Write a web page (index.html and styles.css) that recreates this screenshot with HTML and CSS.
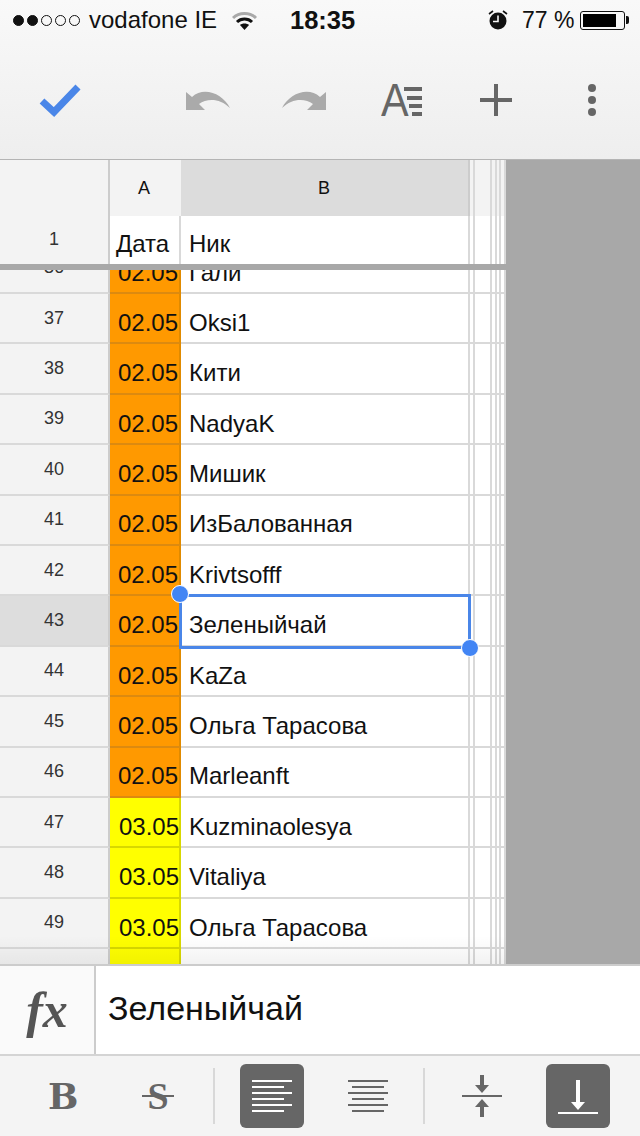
FILE: index.html
```html
<!DOCTYPE html>
<html lang="ru">
<head>
<meta charset="UTF-8">
<meta name="viewport" content="width=device-width, initial-scale=1.0">
<title>Sheet</title>
<link rel="stylesheet" href="styles.css">
</head>
<body>
<div class="phone">
  <div class="top">
    <div class="status">
      <div class="signal">
        <i class="dot on"></i><i class="dot on"></i><i class="dot"></i><i class="dot"></i><i class="dot"></i>
      </div>
      <span class="carrier">vodafone IE</span>
      <svg class="wifi" width="25" height="18" viewBox="0 0 25 18">
        <path d="M1 6 C7 0 18 0 24 6" fill="none" stroke="#a9a9a9" stroke-width="3"/>
        <path d="M5 10 C9 6 16 6 20 10" fill="none" stroke="#111" stroke-width="3"/>
        <path d="M8 13 C10 11 15 11 17 13 L12.5 18 Z" fill="#111"/>
      </svg>
      <span class="time">18:35</span>
      <svg class="alarm" width="20" height="20" viewBox="0 0 20 20">
        <circle cx="10" cy="11" r="8.5" fill="#111"/>
        <path d="M10 5.5 V11.5 H5" fill="none" stroke="#f7f7f7" stroke-width="1.6"/>
        <path d="M1 4 L5 1 M19 4 L15 1" stroke="#111" stroke-width="1.6"/>
      </svg>
      <span class="percent">77 %</span>
      <div class="battery"><div class="battery-fill"></div></div>
      <div class="battery-tip"></div>
    </div>
    <div class="tools">
      <svg class="ic-check" width="42" height="34" viewBox="0 0 42 34">
        <path d="M3 18 L15 29 L39 4" fill="none" stroke="#4a86e8" stroke-width="7"/>
      </svg>
      <svg class="ic-undo" width="44" height="20" viewBox="0 0 44 20">
        <path d="M0 2 V20 H19 L13 14 C21 8 34 8 44 18 C37 4 18 -4 6 7 Z" fill="#aaa"/>
      </svg>
      <svg class="ic-redo" width="44" height="20" viewBox="0 0 44 20">
        <path transform="translate(44 0) scale(-1 1)" d="M0 2 V20 H19 L13 14 C21 8 34 8 44 18 C37 4 18 -4 6 7 Z" fill="#aaa"/>
      </svg>
      <svg class="ic-format" width="42" height="34" viewBox="0 0 42 34">
        <text x="0" y="33" transform="scale(0.9 1)" class="ic-letter">A</text>
        <path d="M23 4 H41 V8 H23 Z M26 13 H41 V17 H26 Z M28 21 H41 V25 H28 Z M31 29 H41 V33 H31 Z" fill="#666"/>
      </svg>
      <svg class="ic-plus" width="32" height="32" viewBox="0 0 32 32">
        <path d="M14 0 H18 V14 H32 V18 H18 V32 H14 V18 H0 V14 H14 Z" fill="#666"/>
      </svg>
      <svg class="ic-more" width="8" height="32" viewBox="0 0 8 32">
        <circle cx="4" cy="4" r="4" fill="#666"/>
        <circle cx="4" cy="16" r="4" fill="#666"/>
        <circle cx="4" cy="28" r="4" fill="#666"/>
      </svg>
    </div>
  </div>

  <div class="sheet">
    <div class="grid">
      <div class="frozen">
        <div class="row head">
          <div class="num"></div>
          <div class="date">A</div>
          <div class="nick">B</div>
          <div class="rest"></div>
        </div>
        <div class="row title">
          <div class="num">1</div>
          <div class="date">Дата</div>
          <div class="nick">Ник</div>
          <div class="rest"></div>
        </div>
      </div>
      <div class="rows">
        <div class="rows-inner">
          <div class="row"><div class="num">36</div><div class="date orange">02.05</div><div class="nick">Гали</div><div class="rest"></div></div>
          <div class="row"><div class="num">37</div><div class="date orange">02.05</div><div class="nick">Oksi1</div><div class="rest"></div></div>
          <div class="row"><div class="num">38</div><div class="date orange">02.05</div><div class="nick">Кити</div><div class="rest"></div></div>
          <div class="row"><div class="num">39</div><div class="date orange">02.05</div><div class="nick">NadyaK</div><div class="rest"></div></div>
          <div class="row"><div class="num">40</div><div class="date orange">02.05</div><div class="nick">Мишик</div><div class="rest"></div></div>
          <div class="row"><div class="num">41</div><div class="date orange">02.05</div><div class="nick">ИзБалованная</div><div class="rest"></div></div>
          <div class="row"><div class="num">42</div><div class="date orange">02.05</div><div class="nick">Krivtsofff</div><div class="rest"></div></div>
          <div class="row active">
            <div class="num">43</div><div class="date orange">02.05</div>
            <div class="nick">Зеленыйчай
              <div class="selection"><i class="handle handle-start"></i><i class="handle handle-end"></i></div>
            </div>
            <div class="rest"></div>
          </div>
          <div class="row"><div class="num">44</div><div class="date orange">02.05</div><div class="nick">KaZa</div><div class="rest"></div></div>
          <div class="row"><div class="num">45</div><div class="date orange">02.05</div><div class="nick">Ольга Тарасова</div><div class="rest"></div></div>
          <div class="row"><div class="num">46</div><div class="date orange">02.05</div><div class="nick">Marleanft</div><div class="rest"></div></div>
          <div class="row"><div class="num">47</div><div class="date yellow">03.05</div><div class="nick">Kuzminaolesya</div><div class="rest"></div></div>
          <div class="row"><div class="num">48</div><div class="date yellow">03.05</div><div class="nick">Vitaliya</div><div class="rest"></div></div>
          <div class="row"><div class="num">49</div><div class="date yellow">03.05</div><div class="nick">Ольга Тарасова</div><div class="rest"></div></div>
          <div class="row"><div class="num"></div><div class="date yellow"></div><div class="nick"></div><div class="rest"></div></div>
        </div>
        <div class="fade"></div>
      </div>
    </div>
    <div class="blank"></div>
  </div>

  <div class="formula">
    <div class="fx">fx</div>
    <div class="formula-text">Зеленыйчай</div>
  </div>

  <div class="format">
    <span class="bold">B</span>
    <svg class="ic-strike" width="32" height="30" viewBox="0 0 32 30">
      <text x="16" y="28" class="ic-s">S</text>
      <rect x="0" y="14" width="32" height="2" fill="#666"/>
    </svg>
    <div class="sep sep-one"></div>
    <div class="tile tile-left">
      <svg width="40" height="32" viewBox="0 0 40 32">
        <path d="M0 1 H40 M0 7 H32 M0 13 H40 M0 19 H32 M0 25 H40 M0 31 H32" stroke="#fff" stroke-width="2"/>
      </svg>
    </div>
    <svg class="ic-center" width="40" height="32" viewBox="0 0 40 32">
      <path d="M0 1 H40 M4 7 H36 M0 13 H40 M4 19 H36 M0 25 H40 M4 31 H36" stroke="#666" stroke-width="2"/>
    </svg>
    <div class="sep sep-two"></div>
    <svg class="ic-middle" width="40" height="42" viewBox="0 0 40 42">
      <path d="M18 0 H22 V10 H27 L20 18 L13 10 H18 Z M0 20 H40 V22 H0 Z M20 24 L27 32 H22 V42 H18 V32 H13 Z" fill="#666"/>
    </svg>
    <div class="tile tile-right">
      <svg class="ic-bottom" width="40" height="34" viewBox="0 0 40 34">
        <path d="M18 0 H22 V22 H27 L20 30 L13 22 H18 Z M0 32 H40 V34 H0 Z" fill="#fff"/>
      </svg>
    </div>
  </div>
</div>
</body>
</html>
```

FILE: styles.css
```css
html, body {
  margin: 0;
  padding: 0;
}

body {
  font-family: "Liberation Sans", Arial, sans-serif;
  background-color: #fff;
}

.phone {
  width: 640px;
  height: 1136px;
  display: flex;
  flex-direction: column;
  overflow: hidden;
}

/* top bars */
.top {
  height: 159px;
  flex: none;
  background: linear-gradient(#f9f9f9, #eee);
  border-bottom: 1px solid #b4b4b4;
}

.status {
  height: 40px;
  display: flex;
  align-items: center;
  padding-left: 13px;
  color: #111;
  font-size: 24px;
}

.signal {
  display: flex;
  gap: 3px;
}

.dot {
  display: block;
  width: 9px;
  height: 9px;
  border: 1px solid #111;
  border-radius: 50%;
}

.dot.on {
  background-color: #111;
}

.carrier {
  margin-left: 9px;
  width: 143px;
}

.wifi {
  margin-top: 1px;
}

.time {
  margin-left: 33px;
  width: 198px;
  font-weight: bold;
  font-size: 25.5px;
}

.percent {
  margin-left: 14px;
  width: 58px;
  font-size: 23px;
}

.battery {
  width: 45px;
  height: 19px;
  box-sizing: border-box;
  padding: 2px;
  border: 1px solid #111;
  border-radius: 3px;
}

.battery-fill {
  width: 33px;
  height: 13px;
  background-color: #000;
}

.battery-tip {
  width: 3px;
  height: 8px;
  margin-left: 1px;
  border-radius: 0 2px 2px 0;
  background-color: #111;
}

.tools {
  height: 119px;
  box-sizing: border-box;
  display: flex;
  align-items: center;
  padding: 1px 0 0 39px;
}

.tools svg {
  flex: none;
}

.ic-undo {
  margin-left: 105px;
}

.ic-redo {
  margin-left: 52px;
}

.ic-format {
  margin-left: 55px;
}

.ic-letter {
  font-family: "Liberation Sans", Arial, sans-serif;
  font-size: 46px;
  fill: #666;
}

.ic-plus {
  margin-left: 57px;
}

.ic-more {
  margin-left: 76px;
}

/* spreadsheet */
.sheet {
  height: 804px;
  flex: none;
  display: flex;
  background-color: #a8a8a8;
}

.grid {
  width: 506px;
  flex: none;
  display: flex;
  flex-direction: column;
  background-color: #fff;
}

.row {
  height: 50.4px;
  display: flex;
  font-size: 24px;
  color: #111;
}

.num {
  width: 110px;
  flex: none;
  box-sizing: border-box;
  display: flex;
  align-items: center;
  justify-content: center;
  font-size: 18px;
  color: #333;
  background-color: #f3f3f3;
  border-right: 2px solid #ccc;
  border-bottom: 2px solid #d9d9d9;
}

.date {
  width: 71px;
  flex: none;
  box-sizing: border-box;
  display: flex;
  align-items: flex-end;
  justify-content: flex-end;
  padding: 0 3px 5.5px 0;
  border-bottom: 2px solid #d9d9d9;
}

.nick {
  width: 289px;
  flex: none;
  box-sizing: border-box;
  display: flex;
  align-items: flex-end;
  padding: 0 0 5.5px 8px;
  border-left: 2px solid #d9d9d9;
  border-right: 2px solid #d9d9d9;
  border-bottom: 2px solid #d9d9d9;
}

.rest {
  flex: 1;
  background-image:
    linear-gradient(#d9d9d9, #d9d9d9),
    linear-gradient(#d9d9d9, #d9d9d9),
    linear-gradient(#d9d9d9, #d9d9d9),
    linear-gradient(#d9d9d9, #d9d9d9),
    linear-gradient(#d9d9d9, #d9d9d9);
  background-repeat: no-repeat;
  background-size: 2px 100%;
  background-position: 3px 0, 20px 0, 25px 0, 29px 0, 34px 0;
  border-bottom: 2px solid #d9d9d9;
  box-sizing: border-box;
}

.orange {
  background-color: #f90;
  border-right: 2px solid #e08a00;
  border-bottom-color: #dc8a10;
  padding-right: 1px;
}

.yellow {
  background-color: #ff0;
  border-right: 2px solid #d8d800;
  border-bottom-color: #d8d800;
  padding-right: 0;
}

.orange + .nick, .yellow + .nick {
  border-left: none;
}

.frozen {
  flex: none;
  border-bottom: 6px solid #a8a8a8;
}

.head {
  height: 56px;
  font-size: 18px;
}

.head .num {
  border-bottom: none;
}

.head .date {
  align-items: center;
  justify-content: center;
  padding: 0 3px 0 0;
  background-color: #f3f3f3;
  border-bottom: none;
}

.head .nick {
  align-items: center;
  justify-content: center;
  padding: 0 1px 0 0;
  background-color: #dcdcdc;
  border-left: none;
  border-right-color: #ccc;
  border-bottom: none;
}

.head .rest {
  background-color: #f3f3f3;
  border-bottom: none;
}

.title {
  height: 48px;
}

.title .num {
  border-bottom: none;
  padding-bottom: 1px;
}

.title .date {
  justify-content: center;
  padding: 0 4px 6px 0;
  border-right: 2px solid #d9d9d9;
  border-bottom: none;
}

.title .nick {
  border-left: none;
  padding-bottom: 6px;
  border-bottom: none;
}

.title .rest {
  border-bottom: none;
}

.rows {
  flex: 1;
  position: relative;
  overflow: hidden;
}

.rows-inner {
  margin-top: -26.4px;
}

.fade {
  position: absolute;
  left: 0;
  right: 0;
  bottom: 0;
  height: 28px;
  background: linear-gradient(rgba(0, 0, 0, 0), rgba(0, 0, 0, 0.05));
}

.active .num {
  background-color: #ddd;
}

.active .nick {
  position: relative;
}

.selection {
  position: absolute;
  z-index: 1;
  left: -2px;
  top: -2px;
  right: -3px;
  bottom: -4px;
  border: 3px solid #4a86e8;
}

.handle {
  position: absolute;
  width: 16px;
  height: 16px;
  border: 1px solid #fff;
  border-radius: 50%;
  background-color: #4285f4;
}

.handle-start {
  left: -11px;
  top: -12px;
}

.handle-end {
  right: -11px;
  bottom: -11px;
}

.blank {
  flex: 1;
}

/* formula bar */
.formula {
  height: 88px;
  flex: none;
  display: flex;
  border-top: 2px solid #ccc;
  border-bottom: 2px solid #d4d4d4;
}

.fx {
  width: 94px;
  flex: none;
  display: flex;
  align-items: center;
  justify-content: center;
  font-family: "Liberation Serif", "Times New Roman", serif;
  font-style: italic;
  font-weight: bold;
  font-size: 50px;
  color: #555;
  background-color: #fafafa;
  border-right: 2px solid #ccc;
}

.formula-text {
  flex: 1;
  display: flex;
  align-items: center;
  padding: 0 0 3px 12px;
  font-size: 34px;
  color: #111;
}

/* format bar */
.format {
  flex: 1;
  display: flex;
  align-items: center;
  background-color: #f4f4f4;
}

.bold {
  width: 28px;
  margin-left: 48px;
  font-family: "DejaVu Serif", serif;
  font-weight: bold;
  font-size: 36px;
  line-height: 44px;
  color: #666;
}

.ic-strike {
  margin-left: 66px;
}

.ic-s {
  font-family: "Liberation Serif", serif;
  font-weight: bold;
  font-size: 38px;
  text-anchor: middle;
  fill: #666;
}

.sep {
  width: 2px;
  height: 56px;
  background-color: #d8d8d8;
}

.sep-one {
  margin-left: 39px;
}

.sep-two {
  margin-left: 35px;
}

.tile {
  width: 64px;
  height: 64px;
  border-radius: 6px;
  background-color: #666;
  display: flex;
  align-items: center;
  justify-content: center;
}

.tile-left {
  margin-left: 25px;
}

.tile-right {
  margin-left: 44px;
}

.ic-bottom {
  margin-top: 2px;
}

.ic-center {
  margin-left: 44px;
}

.ic-middle {
  margin-left: 37px;
}
```
